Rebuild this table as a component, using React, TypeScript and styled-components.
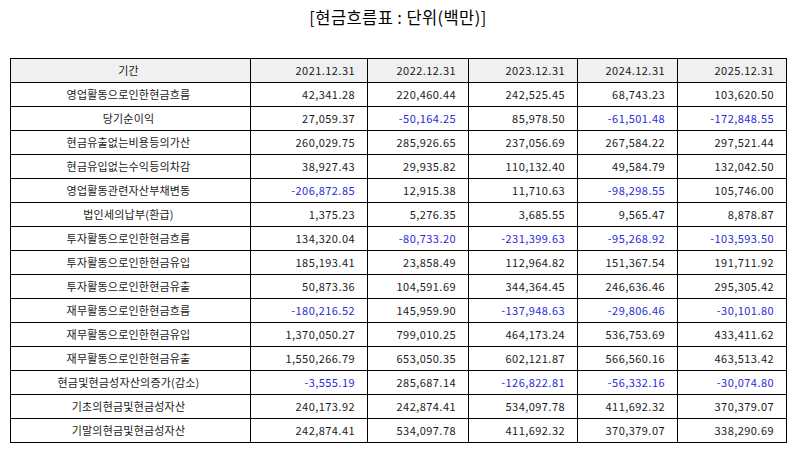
import { createGlobalStyle } from 'styled-components'
import styled from 'styled-components'

const GlobalStyle = createGlobalStyle`
  body {
    margin: 0;
    background: #fff;
    font-family: "Noto Sans CJK KR", "Noto Sans", sans-serif;
    color: #111;
  }
`

const Page = styled.div`
  width: 794px;
  height: 452px;
  padding: 6px 8px 0 10px;
  box-sizing: border-box;
`

const Title = styled.h1`
  margin: 0;
  height: 52px;
  font-size: 16.5px;
  font-weight: 400;
  line-height: 22px;
  letter-spacing: 0.4px;
  text-align: center;
  color: #000;
`

const Table = styled.table`
  border-collapse: collapse;
  table-layout: fixed;
  width: 776px;
  font-size: 11px;
`

const Cell = styled.td<{ $label?: boolean; $neg?: boolean; $head?: boolean }>`
  border: 1px solid #000;
  height: 24px;
  padding: 0 12px 0 8px;
  box-sizing: border-box;
  font-weight: 400;
  text-align: ${(p) => (p.$label ? 'center' : 'right')};
  letter-spacing: ${(p) => (p.$label ? '0.2px' : '0.45px')};
  color: ${(p) => (p.$neg ? '#2a2ad8' : '#1a1a1a')};
  background: ${(p) => (p.$head ? '#f0f0f0' : '#fff')};
  white-space: nowrap;
  line-height: 1;
`

const widths = [240, 117, 101, 109, 100, 109]
const years = ['2021.12.31', '2022.12.31', '2023.12.31', '2024.12.31', '2025.12.31']

// prettier-ignore
const rows: [string, string[]][] = [
  ['영업활동으로인한현금흐름', ['42,341.28', '220,460.44', '242,525.45', '68,743.23', '103,620.50']],
  ['당기순이익', ['27,059.37', '-50,164.25', '85,978.50', '-61,501.48', '-172,848.55']],
  ['현금유출없는비용등의가산', ['260,029.75', '285,926.65', '237,056.69', '267,584.22', '297,521.44']],
  ['현금유입없는수익등의차감', ['38,927.43', '29,935.82', '110,132.40', '49,584.79', '132,042.50']],
  ['영업활동관련자산부채변동', ['-206,872.85', '12,915.38', '11,710.63', '-98,298.55', '105,746.00']],
  ['법인세의납부(환급)', ['1,375.23', '5,276.35', '3,685.55', '9,565.47', '8,878.87']],
  ['투자활동으로인한현금흐름', ['134,320.04', '-80,733.20', '-231,399.63', '-95,268.92', '-103,593.50']],
  ['투자활동으로인한현금유입', ['185,193.41', '23,858.49', '112,964.82', '151,367.54', '191,711.92']],
  ['투자활동으로인한현금유출', ['50,873.36', '104,591.69', '344,364.45', '246,636.46', '295,305.42']],
  ['재무활동으로인한현금흐름', ['-180,216.52', '145,959.90', '-137,948.63', '-29,806.46', '-30,101.80']],
  ['재무활동으로인한현금유입', ['1,370,050.27', '799,010.25', '464,173.24', '536,753.69', '433,411.62']],
  ['재무활동으로인한현금유출', ['1,550,266.79', '653,050.35', '602,121.87', '566,560.16', '463,513.42']],
  ['현금및현금성자산의증가(감소)', ['-3,555.19', '285,687.14', '-126,822.81', '-56,332.16', '-30,074.80']],
  ['기초의현금및현금성자산', ['240,173.92', '242,874.41', '534,097.78', '411,692.32', '370,379.07']],
  ['기말의현금및현금성자산', ['242,874.41', '534,097.78', '411,692.32', '370,379.07', '338,290.69']],
]

export default function App() {
  return (
    <Page>
      <GlobalStyle />
      <Title>[현금흐름표 : 단위(백만)]</Title>
      <Table>
        <colgroup>
          {widths.map((w, i) => (
            <col key={i} style={{ width: w }} />
          ))}
        </colgroup>
        <thead>
          <tr>
            <Cell as="th" $head $label>기간</Cell>
            {years.map((y) => (
              <Cell as="th" $head key={y}>{y}</Cell>
            ))}
          </tr>
        </thead>
        <tbody>
          {rows.map(([label, vals]) => (
            <tr key={label}>
              <Cell $label>{label}</Cell>
              {vals.map((v, i) => (
                <Cell key={i} $neg={v.startsWith('-')}>{v}</Cell>
              ))}
            </tr>
          ))}
        </tbody>
      </Table>
    </Page>
  )
}
